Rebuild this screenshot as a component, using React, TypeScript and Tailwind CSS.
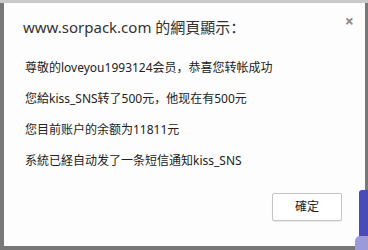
import React from "react";

const lines = [
  "尊敬的loveyou1993124会员，恭喜您转帐成功",
  "您給kiss_SNS转了500元，他现在有500元",
  "您目前账户的余额为11811元",
  "系統已経自动发了一条短信通知kiss_SNS",
];

const App: React.FC = () => {
  return (
    <div className="relative w-[368px] h-[250px] overflow-hidden bg-[#787878] pt-[3px] pl-[4px] font-['Noto_Sans','Noto_Sans_CJK_SC',sans-serif]">
      <div className="absolute left-0 top-0 w-full h-[3px] bg-[#c9c9c9]" />
      <div className="relative w-[361px] h-[243px] bg-[#fdfdfd] flex flex-col">
        <div className="flex justify-between items-start">
          <div className="pl-[19px] pt-[14px] text-[15px] leading-[20px] text-[#333]">
            www.sorpack.com 的網頁顯示：
          </div>
          <div className="pr-[11px] pt-[8px] text-[16px] leading-[20px] font-bold text-[#8a8a8a]">×</div>
        </div>
        <div className="pl-[21px] pt-[22px] flex flex-col gap-[14px] text-[12px] leading-[17px] text-[#222]">
          {lines.map((l) => (
            <div key={l}>{l}</div>
          ))}
        </div>
        <div className="flex justify-end pr-[23px] pt-[24px]">
          <div className="w-[70px] h-[28px] flex items-center justify-center border border-[#c4c4c4] rounded-[2px] bg-white text-[12px] text-[#222] shadow-[0_1px_1px_rgba(0,0,0,0.08)]">
            確定
          </div>
        </div>
      </div>
      <div className="absolute left-[359px] top-[190px] w-[12px] h-[60px] bg-[#4a4bb6] rounded-tl-[3px]" />
      <div className="absolute left-[355px] top-[236px] w-[16px] h-[16px] bg-[#9c9ad8] rounded-tl-[5px]" />
    </div>
  );
};

export default App;
